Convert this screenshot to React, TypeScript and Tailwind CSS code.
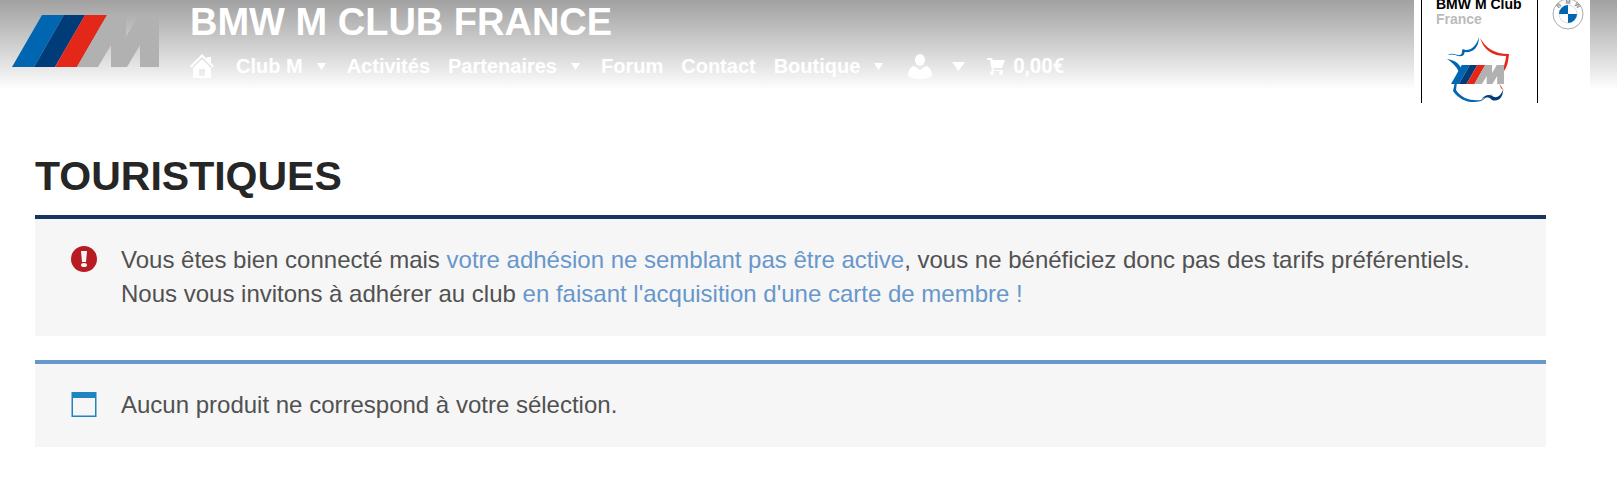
import React from 'react';

interface NavItem {
  label: string;
  hasMenu?: boolean;
}

const navItems: NavItem[] = [
  { label: 'Club M', hasMenu: true },
  { label: 'Activités' },
  { label: 'Partenaires', hasMenu: true },
  { label: 'Forum' },
  { label: 'Contact' },
  { label: 'Boutique', hasMenu: true },
];

const Caret = () => (
  <svg viewBox="0 0 9 7" className="ml-[14px] mr-[3px] h-[7px] w-[9px] fill-white" aria-hidden="true">
    <path d="M0 0h9L4.500 7z" />
  </svg>
);

const MShapes = () => (
  <>
    <path d="M30 0h22L22 52H0z" fill="#0066b1" />
    <path d="M52 0h21L43 52H22z" fill="#003c78" />
    <path d="M73 0h22L65 52H43z" fill="#e3281a" />
    <path d="M95 0h19v22L127 0h20v52h-19V30l-13 22H99V30L86 52H65z" fill="#b1b1b1" />
  </>
);

const MLogo = () => (
  <svg viewBox="0 0 147 52" className="h-[52px] w-[147px]" role="img" aria-label="BMW M">
    <MShapes />
  </svg>
);

const FranceLogo = () => (
  <svg viewBox="0 0 64 68" className="mt-2 ml-[11px] h-[68px] w-16" fill="none" role="img" aria-label="France">
    <path d="M1 20c5-3 9 1 12 0 3-1 1-4 3-6 5 3 13-1 16-12 0 12-8 16-14 15-1 0 0 3-3 4-5 1-8-3-14-1z" fill="#0066b1" />
    <path d="M33 3c6 10 14 16 29 16-1 8-1 11-5 17-1-6 2-9 2-15C45 21 37 15 33 3z" fill="#e3281a" />
    <path d="M0 24c7 1 12 4 14 9l-2 4C9 31 5 27 0 24zM10 47l-1 8c6 9 15 11 25 10 4-1 7-6 12-5-5 0-8 4-12 6-10 3-21 0-28-10l2-9z" fill="#0066b1" />
    <path d="M34 65c4-6 9-6 13-3 5 1 7-3 9-7 0 8-5 12-11 10-4-4-7-3-11 0z" fill="#003c78" />
    <path d="M52 48l5 8-3-3z" fill="#e3281a" />
    <svg x="4" y="30" width="53" height="19" viewBox="0 0 147 52" preserveAspectRatio="none">
      <MShapes />
    </svg>
  </svg>
);

const Roundel = () => (
  <svg viewBox="0 0 32 32" className="h-8 w-8" role="img" aria-label="BMW">
    <circle cx="16" cy="16" r="15" fill="#fff" stroke="#aaa" />
    <circle cx="16" cy="16" r="9" fill="#fff" stroke="#b8c8d8" strokeWidth=".6" />
    <path d="M16 7v9H7a9 9 0 0 1 9-9zM16 25v-9h9a9 9 0 0 1-9 9z" fill="#0066b1" />
    <g fill="#888" fontSize="6" fontWeight="bold" fontFamily="Liberation Sans, sans-serif" textAnchor="middle">
      <text transform="translate(8 9) rotate(-42)">B</text>
      <text x="16" y="6">M</text>
      <text transform="translate(24 9) rotate(42)">W</text>
    </g>
  </svg>
);

const Header = () => (
  <header className="flex h-[90px] items-start bg-linear-to-b from-[#a1a1a1] to-white pl-3 pr-[27px]">
    <a href="#accueil" className="mt-[15px] shrink-0">
      <MLogo />
    </a>
    <div className="ml-[31px] grow text-white">
      <p className="text-[38px] leading-[44px] font-bold whitespace-nowrap">BMW M CLUB FRANCE</p>
      <nav className="mt-2 flex h-7 items-center gap-[18px] text-[20px] leading-7 font-bold whitespace-nowrap">
        <a href="#accueil" aria-label="Accueil" className="mr-1">
          <svg viewBox="0 0 24 24" className="h-6 w-6 fill-white">
            <path d="M12 0l5 5V3h4v6l3 3-1.500 1.500L12 3 1.500 13.500 0 12z" />
            <path fillRule="evenodd" d="M12 5l9 9v10H3V14zM9 15v7h6v-7z" />
          </svg>
        </a>
        {navItems.map((item) => (
          <a key={item.label} href="#menu" className="flex items-center">
            {item.label}
            {item.hasMenu && <Caret />}
          </a>
        ))}
        <a href="#compte" aria-label="Mon compte" className="ml-1 flex items-center gap-5">
          <svg viewBox="0 0 24 25" className="h-[25px] w-6 fill-white">
            <ellipse cx="12" cy="6" rx="5" ry="6" />
            <path d="M6 12l6 4 6-4c4 1 6 5 6 10-4 4-20 4-24 0 0-5 2-9 6-10z" />
          </svg>
          <svg viewBox="0 0 13 9" className="h-[9px] w-[13px] fill-white">
            <path d="M0 0h13L6.500 9z" />
          </svg>
        </a>
        <a href="#panier" className="ml-1 flex items-center gap-2 font-[Roboto,sans-serif]">
          <svg viewBox="0 0 18 17" className="h-[17px] w-[18px] fill-white" aria-hidden="true">
            <path d="M0 0h5l1 2h12l-3 8H6l1 2h9v1H5L3 2H0z" />
            <circle cx="5" cy="15" r="2" />
            <circle cx="14" cy="15" r="2" />
          </svg>
          0,00€
        </a>
      </nav>
    </div>
    <div className="flex h-[104px] w-44 shrink-0 bg-white pl-[7px]">
      <div className="h-[103px] w-[117px] border-x border-black pl-[14px] text-[14px] leading-[15px] font-bold">
        <div className="-mt-[3px] text-black">BMW M Club</div>
        <div className="text-[#bbb]">France</div>
        <FranceLogo />
      </div>
      <div className="-mt-[2px] ml-[14px]">
        <Roundel />
      </div>
    </div>
  </header>
);

const AlertIcon = () => (
  <svg viewBox="0 0 26 26" className="h-[26px] w-[26px]" aria-hidden="true">
    <circle cx="13" cy="13" r="13" fill="#b81c23" />
    <path d="M10 5h6l-1 11h-4z" fill="#f6f6f6" />
    <ellipse cx="13" cy="19" rx="3" ry="2" fill="#f6f6f6" />
  </svg>
);

const WindowIcon = () => (
  <svg viewBox="0 0 26 26" className="h-[26px] w-[26px]" aria-hidden="true">
    <path fillRule="evenodd" d="M.500 1h25v25H.500zM2 7v17.500h22V7z" fill="#1e85be" />
  </svg>
);

interface NoticeProps {
  icon: React.ReactNode;
  className: string;
  children: React.ReactNode;
}

const Notice = ({ icon, className, children }: NoticeProps) => (
  <div className={`flex gap-6 border-t-4 bg-[#f6f6f6] px-9 pt-6 text-[24px] leading-[34px] text-[#515151] ${className}`}>
    <div className="mt-[3px] shrink-0">{icon}</div>
    {children}
  </div>
);

const App = () => {
  return (
    <div className="min-h-screen bg-white font-['Liberation_Sans',Arial,sans-serif]">
      <Header />
      <main className="pt-[58px] pr-[71px] pl-[35px]">
        <h1 className="mb-[11px] text-[41px] leading-[56px] font-bold text-[#262626]">TOURISTIQUES</h1>
        <Notice icon={<AlertIcon />} className="mb-6 border-[#183462] pb-[25px]">
          <p>
            Vous êtes bien connecté mais{' '}
            <a href="#adhesion" className="text-[#6897cb]">votre adhésion ne semblant pas être active</a>
            , vous ne bénéficiez donc pas des tarifs préférentiels.
            <br />
            Nous vous invitons à adhérer au club{' '}
            <a href="#carte" className="text-[#6897cb]">en faisant l'acquisition d'une carte de membre !</a>
          </p>
        </Notice>
        <Notice icon={<WindowIcon />} className="border-[#6897cb] pb-[25px]">
          <p>Aucun produit ne correspond à votre sélection.</p>
        </Notice>
      </main>
    </div>
  );
};

export default App;
